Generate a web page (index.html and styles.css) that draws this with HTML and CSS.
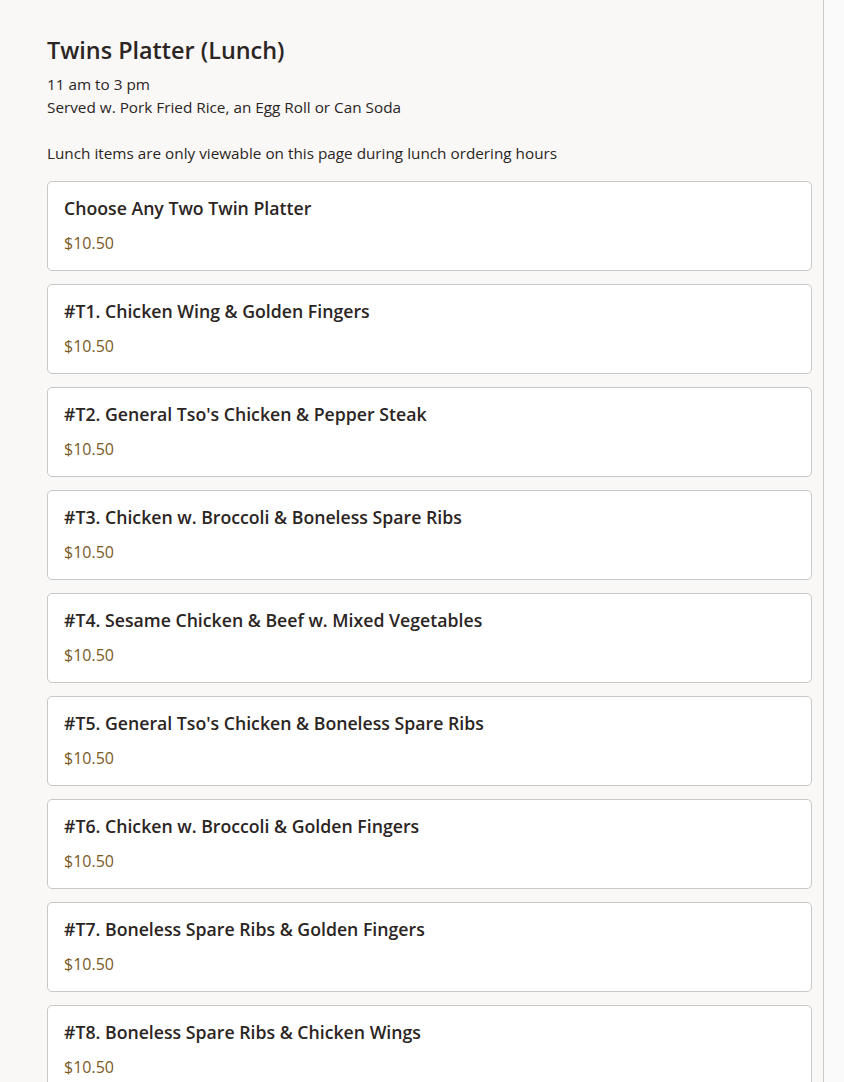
FILE: index.html
```html
<!DOCTYPE html>
<html lang="en">
<head>
<meta charset="utf-8">
<title>Twins Platter (Lunch)</title>
<link rel="stylesheet" href="styles.css">
</head>
<body>
<div class="page">
  <main class="menu">
    <header class="section-head">
      <h1 class="section-title">Twins Platter (Lunch)</h1>
      <p class="section-desc">11 am to 3 pm<br>Served w. Pork Fried Rice, an Egg Roll or Can Soda</p>
      <p class="section-note">Lunch items are only viewable on this page during lunch ordering hours</p>
    </header>
    <div class="items">
      <div class="item"><div class="item-name">Choose Any Two Twin Platter</div><div class="item-price">$10.50</div></div>
      <div class="item"><div class="item-name">#T1. Chicken Wing &amp; Golden Fingers</div><div class="item-price">$10.50</div></div>
      <div class="item"><div class="item-name">#T2. General Tso's Chicken &amp; Pepper Steak</div><div class="item-price">$10.50</div></div>
      <div class="item"><div class="item-name">#T3. Chicken w. Broccoli &amp; Boneless Spare Ribs</div><div class="item-price">$10.50</div></div>
      <div class="item"><div class="item-name">#T4. Sesame Chicken &amp; Beef w. Mixed Vegetables</div><div class="item-price">$10.50</div></div>
      <div class="item"><div class="item-name">#T5. General Tso's Chicken &amp; Boneless Spare Ribs</div><div class="item-price">$10.50</div></div>
      <div class="item"><div class="item-name">#T6. Chicken w. Broccoli &amp; Golden Fingers</div><div class="item-price">$10.50</div></div>
      <div class="item"><div class="item-name">#T7. Boneless Spare Ribs &amp; Golden Fingers</div><div class="item-price">$10.50</div></div>
      <div class="item"><div class="item-name">#T8. Boneless Spare Ribs &amp; Chicken Wings</div><div class="item-price">$10.50</div></div>
    </div>
  </main>
</div>
</body>
</html>
```

FILE: styles.css
```css
html, body {
  margin: 0;
  padding: 0;
  background: #fafafa;
}
body {
  font-family: "Open Sans", "Lato", sans-serif;
  color: #2b2523;
}
.page {
  width: 823px;
  min-height: 1082px;
  background: #f9f8f7;
  border-right: 1px solid #c9c9c9;
}
.menu {
  padding: 34px 11px 0 47px;
}
.section-title {
  margin: 0;
  font-size: 23.4px;
  font-weight: 600;
  line-height: 32px;
  color: #2b2523;
}
.section-desc {
  margin: 7px 0 0;
  font-size: 15.3px;
  line-height: 23px;
}
.section-note {
  margin: 23px 0 0;
  font-size: 15.3px;
  line-height: 23px;
}
.items {
  margin-top: 16px;
  display: flex;
  flex-direction: column;
  gap: 13px;
}
.item {
  box-sizing: border-box;
  height: 90px;
  background: #fff;
  border: 1px solid #c8c8c8;
  border-radius: 5px;
  padding: 14px 16px 0;
}
.item-name {
  font-size: 17.7px;
  font-weight: 600;
  line-height: 24px;
  color: #2b2523;
}
.item-price {
  margin-top: 12px;
  font-size: 16px;
  line-height: 22px;
  color: #7b5a1f;
}
```
